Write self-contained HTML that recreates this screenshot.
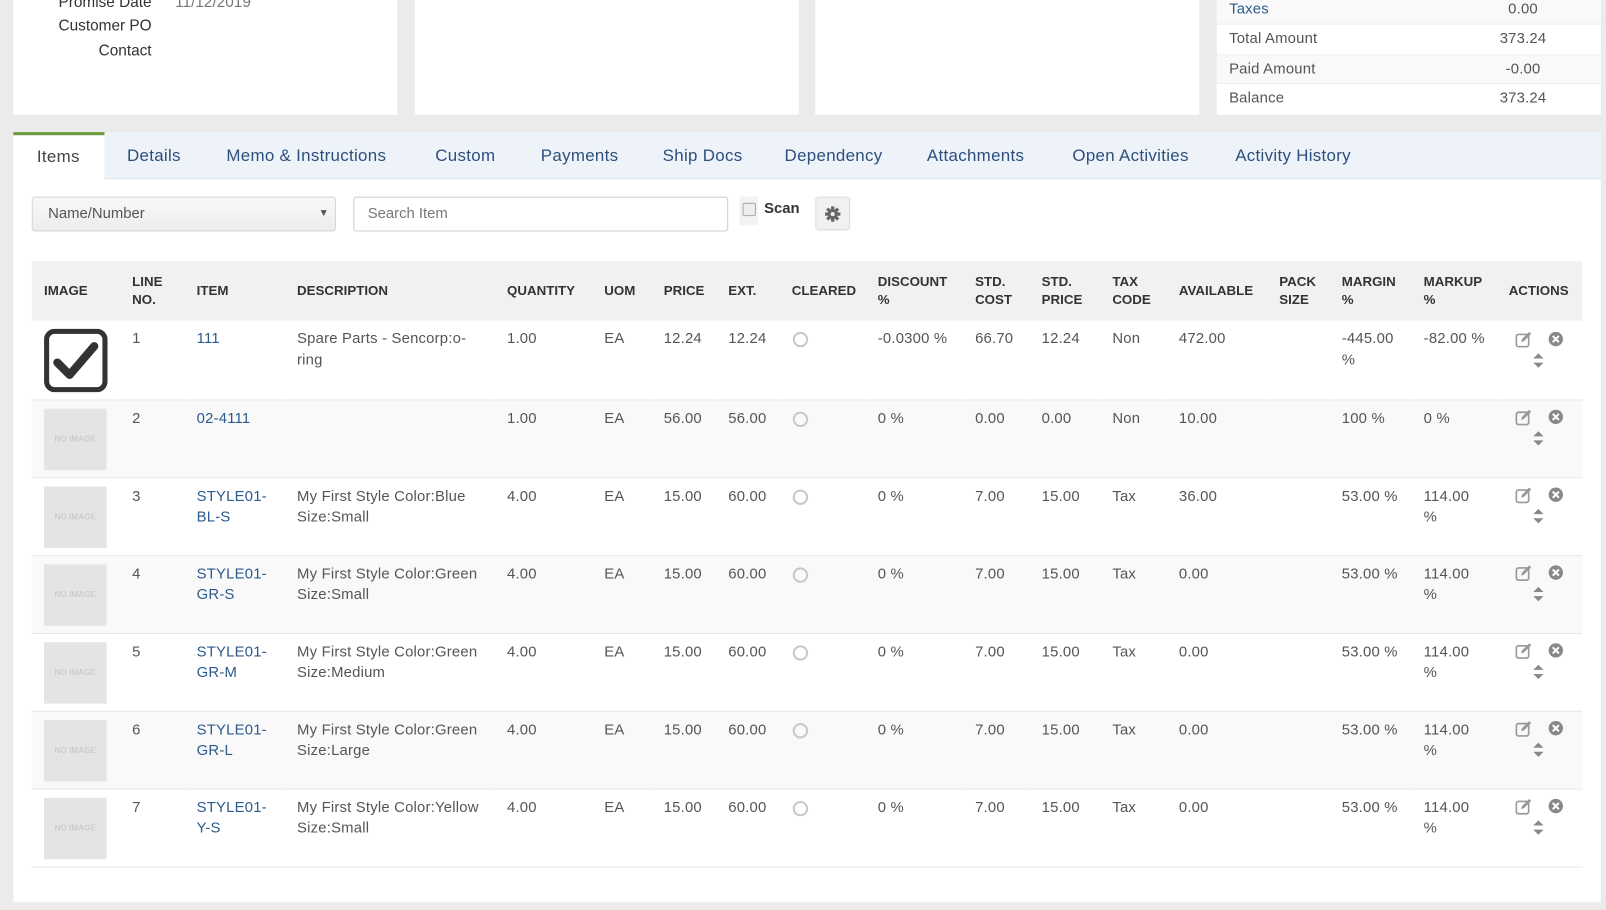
<!DOCTYPE html>
<html><head><meta charset="utf-8"><style>
*{box-sizing:border-box;margin:0;padding:0}
html,body{width:1606px;height:909px;overflow:hidden;background:#ebebeb}
#w{position:absolute;left:0;top:0;width:1568px;height:888px;transform:scale(1.02423);transform-origin:0 0;font-family:"Liberation Sans",sans-serif;color:#555}
.p{position:absolute;background:#fff;top:0;height:112px}
.lab{position:absolute;font-size:15px;color:#333;text-align:right;width:140px}
.sr{position:absolute;left:1188px;width:375px;height:29px;font-size:14.5px;line-height:29px;letter-spacing:0.2px}
.sr span{position:absolute;left:12px}.sr b{position:absolute;font-weight:normal;left:274px;width:50px;text-align:center}
.tabs{position:absolute;left:13px;top:129px;width:1550px;height:46px;background:#eef3fa;border-bottom:1px solid #dbe3ec}
.tab{position:absolute;top:0;height:46px;line-height:46px;font-size:16.5px;color:#2c4f7c;letter-spacing:0.3px}
.act{left:0;width:89px;background:#fff;border-top:3px solid #6a9a3a;line-height:43px;color:#444;padding-left:23px;height:47px}
.main{position:absolute;left:13px;top:175px;width:1550px;height:706px;background:#fff}
.sel{position:absolute;left:31px;top:192px;width:297px;height:34px;background:linear-gradient(#f8f8f8,#ededed);border:1px solid #d4d4d4;border-radius:3px;font-size:14.5px;line-height:32px;padding-left:15px;color:#555}
.inp{position:absolute;left:345px;top:192px;width:366px;height:34px;border:1px solid #ccc;border-radius:3px;font-size:14.5px;line-height:32px;padding-left:13px;color:#777}
table{position:absolute;left:31px;top:255px;width:1514px;border-collapse:collapse;table-layout:fixed}
th{background:#f1f1f1;height:58px;font-size:13px;font-weight:bold;color:#333;text-align:left;padding-left:12px;line-height:18px;vertical-align:middle;white-space:nowrap}
td{height:76px;vertical-align:top;padding:8px 0 0 12px;font-size:14.5px;line-height:20.5px;color:#555;border-bottom:1px solid #e8e8e8;letter-spacing:0.2px;white-space:nowrap}
tr.g td{background:#f9f9f9}
a{color:#2c5a8c;text-decoration:none}
.ni{width:61px;height:60px;background:#e6e3e3;color:#ccc;font-size:8px;font-weight:bold;text-align:center;line-height:60px;letter-spacing:0}
.rad{display:inline-block;width:15px;height:15px;border:2px solid #c8c8c8;border-radius:50%;margin:3px 0 0 1px}
.ic{position:relative;height:50px}
</style></head><body><div id="w">
<div class="p" style="left:13px;width:375px">
<div class="lab" style="left:-5px;top:-6px">Promise Date <span style="color:#777;position:absolute;left:163px;white-space:nowrap">11/12/2019</span></div>
<div class="lab" style="left:-5px;top:17px">Customer PO</div>
<div class="lab" style="left:-5px;top:41px">Contact</div></div>
<div class="p" style="left:405px;width:375px"></div>
<div class="p" style="left:796px;width:375px"></div>
<div class="p" style="left:1188px;width:375px"></div>
<div class="sr" style="top:-5px;background:#f9f9f9;border-bottom:1px solid #eee"><span style="color:#2c5a8c">Taxes</span><b>0.00</b></div>
<div class="sr" style="top:24px"><span>Total Amount</span><b>373.24</b></div>
<div class="sr" style="top:53px;background:#f9f9f9;border-top:1px solid #eee;border-bottom:1px solid #eee"><span>Paid Amount</span><b>-0.00</b></div>
<div class="sr" style="top:82px"><span>Balance</span><b>373.24</b></div>
<div class="tabs">
<div class="tab act">Items</div>
<div class="tab" style="left:111px">Details</div>
<div class="tab" style="left:208px">Memo &amp; Instructions</div>
<div class="tab" style="left:412px">Custom</div>
<div class="tab" style="left:515px">Payments</div>
<div class="tab" style="left:634px">Ship Docs</div>
<div class="tab" style="left:753px">Dependency</div>
<div class="tab" style="left:892px">Attachments</div>
<div class="tab" style="left:1034px">Open Activities</div>
<div class="tab" style="left:1193px">Activity History</div>
</div>
<div class="main"></div>
<div class="sel">Name/Number<span style="position:absolute;right:6px;font-size:10px;color:#555">▼</span></div>
<div class="inp">Search Item</div>
<div style="position:absolute;left:722px;top:192px;width:18px;height:28px;background:#f3f3f3"></div>
<div style="position:absolute;left:725px;top:198px;width:13px;height:13px;border:1px solid #aaa;border-radius:2px;background:#eee"></div>
<div style="position:absolute;left:746px;top:196px;font-size:14.5px;font-weight:bold;color:#333">Scan</div>
<div style="position:absolute;left:796px;top:192px;width:34px;height:33px;background:#f1f1f1;border:1px solid #ddd;border-radius:3px"><svg width="32" height="31" viewBox="0 0 32 31"><g transform="translate(16,16)" fill="#666"><circle r="5"/><rect x="-1.6" y="-7.5" width="3.2" height="15"/><rect x="-1.6" y="-7.5" width="3.2" height="15" transform="rotate(45)"/><rect x="-1.6" y="-7.5" width="3.2" height="15" transform="rotate(90)"/><rect x="-1.6" y="-7.5" width="3.2" height="15" transform="rotate(135)"/><circle r="2" fill="#f1f1f1"/></g></svg></div>
<table>
<colgroup><col style="width:86px"><col style="width:63px"><col style="width:98px"><col style="width:205px"><col style="width:95px"><col style="width:58px"><col style="width:63px"><col style="width:62px"><col style="width:84px"><col style="width:95px"><col style="width:65px"><col style="width:69px"><col style="width:65px"><col style="width:98px"><col style="width:61px"><col style="width:80px"><col style="width:83px"><col style="width:84px"></colgroup>
<tr><th>IMAGE</th><th>LINE<br>NO.</th><th>ITEM</th><th>DESCRIPTION</th><th>QUANTITY</th><th>UOM</th><th>PRICE</th><th>EXT.</th><th>CLEARED</th><th>DISCOUNT<br>%</th><th>STD.<br>COST</th><th>STD.<br>PRICE</th><th>TAX<br>CODE</th><th>AVAILABLE</th><th>PACK<br>SIZE</th><th>MARGIN<br>%</th><th>MARKUP<br>%</th><th>ACTIONS</th></tr>
<tr><td><svg width="62" height="62" viewBox="0 0 62 62"><rect x="2.5" y="2.5" width="57" height="57" rx="8" fill="#fff" stroke="#333" stroke-width="5"/><path d="M13 33 L25 45 L49 17" fill="none" stroke="#333" stroke-width="8" stroke-linejoin="round" stroke-linecap="round"/></svg></td><td>1</td><td><a>111</a></td><td>Spare Parts - Sencorp:o-<br>ring</td><td>1.00</td><td>EA</td><td>12.24</td><td>12.24</td><td><span class="rad"></span></td><td>-0.0300 %</td><td>66.70</td><td>12.24</td><td>Non</td><td>472.00</td><td></td><td>-445.00<br>%</td><td>-82.00 %</td><td><div class="ic"></div></td></tr>
<tr class="g"><td><div class="ni">NO IMAGE</div></td><td>2</td><td><a>02-4111</a></td><td></td><td>1.00</td><td>EA</td><td>56.00</td><td>56.00</td><td><span class="rad"></span></td><td>0 %</td><td>0.00</td><td>0.00</td><td>Non</td><td>10.00</td><td></td><td>100 %</td><td>0 %</td><td><div class="ic"></div></td></tr>
<tr><td><div class="ni">NO IMAGE</div></td><td>3</td><td><a>STYLE01-<br>BL-S</a></td><td>My First Style Color:Blue<br>Size:Small</td><td>4.00</td><td>EA</td><td>15.00</td><td>60.00</td><td><span class="rad"></span></td><td>0 %</td><td>7.00</td><td>15.00</td><td>Tax</td><td>36.00</td><td></td><td>53.00 %</td><td>114.00<br>%</td><td><div class="ic"></div></td></tr>
<tr class="g"><td><div class="ni">NO IMAGE</div></td><td>4</td><td><a>STYLE01-<br>GR-S</a></td><td>My First Style Color:Green<br>Size:Small</td><td>4.00</td><td>EA</td><td>15.00</td><td>60.00</td><td><span class="rad"></span></td><td>0 %</td><td>7.00</td><td>15.00</td><td>Tax</td><td>0.00</td><td></td><td>53.00 %</td><td>114.00<br>%</td><td><div class="ic"></div></td></tr>
<tr><td><div class="ni">NO IMAGE</div></td><td>5</td><td><a>STYLE01-<br>GR-M</a></td><td>My First Style Color:Green<br>Size:Medium</td><td>4.00</td><td>EA</td><td>15.00</td><td>60.00</td><td><span class="rad"></span></td><td>0 %</td><td>7.00</td><td>15.00</td><td>Tax</td><td>0.00</td><td></td><td>53.00 %</td><td>114.00<br>%</td><td><div class="ic"></div></td></tr>
<tr class="g"><td><div class="ni">NO IMAGE</div></td><td>6</td><td><a>STYLE01-<br>GR-L</a></td><td>My First Style Color:Green<br>Size:Large</td><td>4.00</td><td>EA</td><td>15.00</td><td>60.00</td><td><span class="rad"></span></td><td>0 %</td><td>7.00</td><td>15.00</td><td>Tax</td><td>0.00</td><td></td><td>53.00 %</td><td>114.00<br>%</td><td><div class="ic"></div></td></tr>
<tr><td><div class="ni">NO IMAGE</div></td><td>7</td><td><a>STYLE01-<br>Y-S</a></td><td>My First Style Color:Yellow<br>Size:Small</td><td>4.00</td><td>EA</td><td>15.00</td><td>60.00</td><td><span class="rad"></span></td><td>0 %</td><td>7.00</td><td>15.00</td><td>Tax</td><td>0.00</td><td></td><td>53.00 %</td><td>114.00<br>%</td><td><div class="ic"></div></td></tr>
</table>
<svg style="position:absolute;left:1470px;top:313px" width="70" height="540">
<defs><g id="a">
<rect x="10.5" y="13.5" width="12" height="12" rx="2" fill="none" stroke="#999" stroke-width="1.6"/>
<path d="M15 21 L16 18 L23 11 L25 13 L18 20 Z" fill="#999"/>
<circle cx="49" cy="18" r="7" fill="#888"/><path d="M46 15 L52 21 M52 15 L46 21" stroke="#fff" stroke-width="2"/>
<path d="M27 37 L32 32 L37 37 Z M27 41 L37 41 L32 46 Z" fill="#888"/>
</g></defs>
<use href="#a" y="0"/><use href="#a" y="76"/><use href="#a" y="152"/><use href="#a" y="228"/><use href="#a" y="304"/><use href="#a" y="380"/><use href="#a" y="456"/>
</svg>
</div></body></html>
